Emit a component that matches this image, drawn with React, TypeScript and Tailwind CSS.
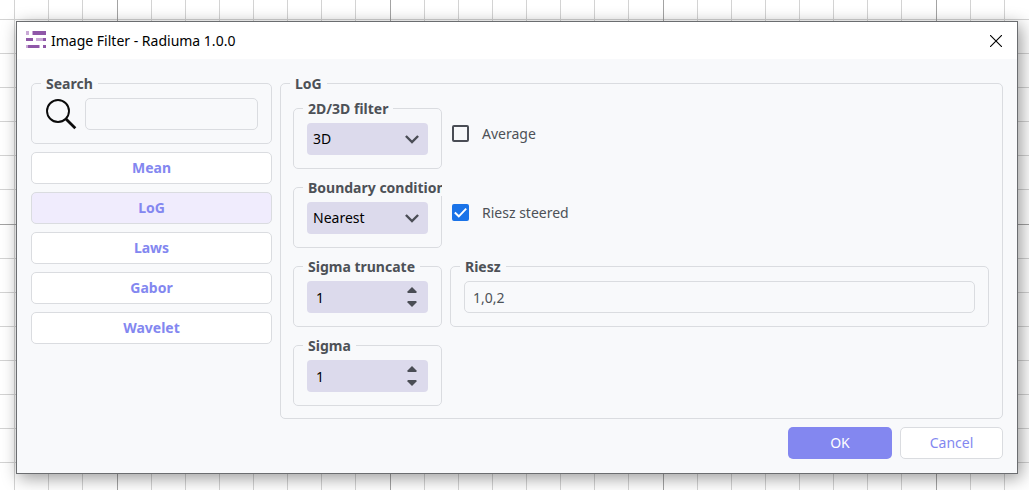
import { useId, useState } from "react";
import type { ReactNode } from "react";

const FILTERS = ["Mean", "LoG", "Laws", "Gabor", "Wavelet"];
const GRID_STEPS = [34, 68, 102, 136, 170, 204, 238];

function GridBackdrop() {
  return (
    <svg className="absolute inset-0 h-full w-full" aria-hidden="true" shapeRendering="crispEdges">
      <defs>
        <pattern id="sheet" x="117" y="224" width="273" height="273" patternUnits="userSpaceOnUse">
          {GRID_STEPS.map((n) => (
            <g key={n} fill="#d3d3d3">
              <rect x={n} y="0" width="1" height="273" />
              <rect x="0" y={n} width="273" height="1" />
            </g>
          ))}
          <rect width="1" height="273" fill="#a3a3a3" />
          <rect width="273" height="1" fill="#a3a3a3" />
        </pattern>
      </defs>
      <rect width="100%" height="100%" fill="url(#sheet)" />
    </svg>
  );
}

function AppLogo() {
  return (
    <svg className="mb-0.5" width="20" height="17" viewBox="0 0 20 17" aria-hidden="true" shapeRendering="crispEdges">
      <g fill="#c9a9d6">
        <rect x="0" y="0" width="3" height="4" />
        <rect x="6" y="0" width="2" height="4" />
        <rect x="10" y="7" width="8" height="3" />
        <rect x="0" y="14" width="2" height="3" />
        <rect x="13" y="14" width="1" height="3" />
      </g>
      <g fill="#8f57a8">
        <rect x="7" y="0" width="13" height="4" />
        <rect x="0" y="7" width="7" height="3" />
        <rect x="17" y="7" width="3" height="3" />
        <rect x="2" y="14" width="11" height="3" />
        <rect x="17" y="14" width="3" height="3" />
      </g>
    </svg>
  );
}

function Group({ title, children }: { title: string; children: ReactNode }) {
  return (
    <div className="min-w-0 overflow-hidden">
      <fieldset className="min-w-0 rounded-[5px] border border-[#dadce0] px-[13px] pt-1.5 pb-[13px]">
        <legend className="-ml-1 bg-[#f8f9fb] px-[5px] pt-0.5 text-sm leading-4 font-bold whitespace-nowrap text-[#4d5157]">
          {title}
        </legend>
        {children}
      </fieldset>
    </div>
  );
}

function Dropdown({ label, options }: { label: string; options: string[] }) {
  return (
    <div className="relative">
      <select
        aria-label={label}
        className="block h-8 w-full appearance-none rounded-[4px] bg-[#dcdaec] pr-8 pl-1.5 text-sm text-black outline-none"
      >
        {options.map((o) => (
          <option key={o}>{o}</option>
        ))}
      </select>
      <svg
        className="pointer-events-none absolute top-3 right-[9px]"
        width="14"
        height="9"
        viewBox="0 0 14 9"
        fill="none"
        stroke="#4a4d55"
        strokeWidth="2.4"
        aria-hidden="true"
      >
        <path d="M.9 1 7 7.1 13.1 1" />
      </svg>
    </div>
  );
}

function Spinner({ label }: { label: string }) {
  const [value, setValue] = useState(1);
  return (
    <div className="flex h-8 items-center rounded-[4px] bg-[#dcdaec] pr-[11px] pl-[9px]">
      <input
        aria-label={label}
        inputMode="numeric"
        value={value}
        onChange={(e) => setValue(Number(e.target.value) || 0)}
        className="h-full w-full min-w-0 bg-transparent text-sm text-black outline-none"
      />
      <div className="flex flex-col gap-2">
        <button type="button" aria-label={"Increase " + label} onClick={() => setValue(value + 1)}>
          <svg className="block" width="10" height="6" viewBox="0 0 10 6" aria-hidden="true">
            <path d="M5 0 9.5 4.5Q9.9 6 9 6H1Q.1 6 .5 4.5Z" fill="#4a4d55" />
          </svg>
        </button>
        <button type="button" aria-label={"Decrease " + label} onClick={() => setValue(value - 1)}>
          <svg className="block" width="10" height="6" viewBox="0 0 10 6" aria-hidden="true">
            <path d="M5 6 9.5 1.5Q9.9 0 9 0H1Q.1 0 .5 1.5Z" fill="#4a4d55" />
          </svg>
        </button>
      </div>
    </div>
  );
}

function Check({ label, initial }: { label: string; initial: boolean }) {
  const id = useId();
  const [on, setOn] = useState(initial);
  return (
    <div className="flex items-center gap-[13px] pl-0.5">
      <span className="relative flex pb-0.5">
        <input
          id={id}
          type="checkbox"
          checked={on}
          onChange={() => setOn(!on)}
          className="h-[17px] w-[17px] appearance-none rounded-[2px] border-2 border-[#4a4d55] checked:border-[#1a73e8] checked:bg-[#1a73e8]"
        />
        {on && (
          <svg
            className="pointer-events-none absolute top-0 left-0"
            width="17"
            height="17"
            viewBox="0 0 17 17"
            fill="none"
            stroke="#fff"
            strokeWidth="1.9"
            aria-hidden="true"
          >
            <path d="M2.8 8.5 6.8 12.3 14.2 4.7" />
          </svg>
        )}
      </span>
      <label htmlFor={id} className="text-sm text-[#4d5157]">
        {label}
      </label>
    </div>
  );
}

export default function App() {
  const [active, setActive] = useState("LoG");
  return (
    <div className="relative min-h-screen bg-white pt-[21px] pr-[11px] pb-4 pl-4 font-['Noto_Sans','Open_Sans',sans-serif] text-sm">
      <GridBackdrop />
      <main className="relative border border-[#6b6d70] bg-[#f8f9fb] shadow-[3px_4px_16px_rgba(0,0,0,0.4)]">
        <header className="flex h-[37px] items-center bg-white pl-[9px]">
          <AppLogo />
          <h1 className="flex-1 pl-[5px] text-sm text-black">Image Filter - Radiuma 1.0.0</h1>
          <button type="button" aria-label="Close" className="flex h-full w-[42px] items-center justify-center">
            <svg width="12" height="12" viewBox="0 0 12 12" stroke="#000" strokeWidth="1.1" aria-hidden="true">
              <path d="M0 0 12 12M12 0 0 12" />
            </svg>
          </button>
        </header>
        <div className="px-3.5 pt-[15px] pb-3.5">
          <div className="flex gap-2">
            <nav className="flex w-[241px] shrink-0 flex-col gap-2">
              <Group title="Search">
                <div className="flex items-center gap-2">
                  <svg
                    className="shrink-0"
                    width="32"
                    height="32"
                    viewBox="0 0 32 32"
                    fill="none"
                    stroke="#0b0b0b"
                    aria-hidden="true"
                  >
                    <circle cx="13" cy="13" r="11" strokeWidth="1.9" />
                    <path d="M21 21 30.3 30.3" strokeWidth="2.8" />
                  </svg>
                  <input
                    aria-label="Search"
                    className="h-8 w-full min-w-0 rounded-[5px] border border-[#dadce0] bg-transparent px-2 outline-none"
                  />
                </div>
              </Group>
              {FILTERS.map((f) => (
                <button
                  key={f}
                  type="button"
                  onClick={() => setActive(f)}
                  className={
                    "h-8 rounded-[5px] border border-[#dadce0] text-sm font-bold text-[#8387f0] " +
                    (f === active ? "bg-[#f0ecfd]" : "bg-white")
                  }
                >
                  {f}
                </button>
              ))}
            </nav>
            <fieldset className="min-w-0 flex-1 rounded-[5px] border border-[#dadce0] pt-[7px] pr-[13px] pb-3 pl-3">
              <legend className="-ml-[3px] px-[5px] pt-0.5 text-sm leading-4 font-bold text-[#4d5157]">LoG</legend>
              <div className="grid grid-cols-[149px_minmax(0,1fr)] gap-x-2 gap-y-[9px]">
                <Group title="2D/3D filter">
                  <Dropdown label="2D/3D filter" options={["3D", "2D"]} />
                </Group>
                <Check label="Average" initial={false} />
                <Group title="Boundary condition">
                  <Dropdown label="Boundary condition" options={["Nearest", "Constant", "Periodic", "Mirror"]} />
                </Group>
                <Check label="Riesz steered" initial={true} />
                <Group title="Sigma truncate">
                  <Spinner label="Sigma truncate" />
                </Group>
                <Group title="Riesz">
                  <input
                    aria-label="Riesz"
                    defaultValue="1,0,2"
                    className="block h-8 w-full rounded-[5px] border border-[#dadce0] bg-transparent px-2 text-sm text-[#4d5157] outline-none"
                  />
                </Group>
                <Group title="Sigma">
                  <Spinner label="Sigma" />
                </Group>
              </div>
            </fieldset>
          </div>
          <div className="flex justify-end gap-2 pt-2">
            <button type="button" className="h-8 w-[104px] rounded-[5px] bg-[#8387f0] text-sm text-white">
              OK
            </button>
            <button
              type="button"
              className="h-8 w-[103px] rounded-[5px] border border-[#dadce0] bg-white text-sm text-[#8387f0]"
            >
              Cancel
            </button>
          </div>
        </div>
      </main>
    </div>
  );
}
